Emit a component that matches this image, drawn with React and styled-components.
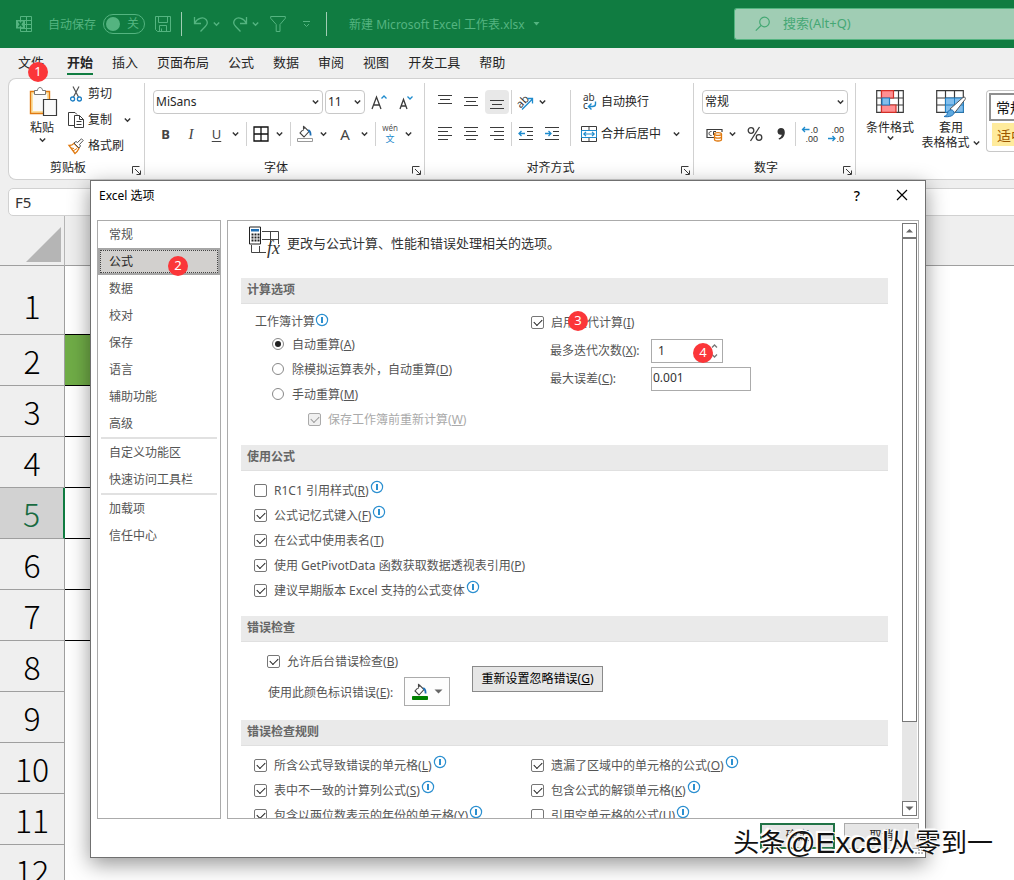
import React from 'react';
import styled, { createGlobalStyle, css } from 'styled-components';

const Global = createGlobalStyle`
  * { box-sizing: border-box; }
  body { margin: 0; background: #efefef; }
  body, button, input, select {
    font-family: "Noto Sans", "Noto Sans CJK SC", sans-serif;
    font-size: 12px;
    color: #262626;
  }
  button { padding: 0; border: 0; background: none; }
  svg { display: block; flex: none; overflow: visible; }
`;

const Page = styled.div`
  position: relative;
  display: flex;
  flex-direction: column;
  height: 100vh;
  overflow: hidden;
`;

/* ---------- title bar ---------- */
const TitleBar = styled.header`
  flex: none;
  display: flex;
  align-items: center;
  height: 48px;
  padding-left: 16px;
  background: #107c41;
  color: #54b480;
  white-space: nowrap;
`;
const TitleGroup = styled.div`
  display: flex;
  align-items: center;
  gap: ${(p) => p.$gap || 0}px;
  margin-left: ${(p) => p.$before || 0}px;
`;
const TitleButton = styled.button`
  display: flex;
  align-items: center;
  justify-content: center;
  width: ${(p) => p.$w}px;
  height: 24px;
  color: #54b480;
`;
const TitleRule = styled.span`
  width: 1px;
  height: 24px;
  background: #a0cdb4;
`;
const Toggle = styled.button`
  display: flex;
  align-items: center;
  justify-content: space-between;
  width: 42px;
  height: 20px;
  padding: 0 5px 0 2px;
  border: 1px solid #54b480;
  border-radius: 10px;
  color: #54b480;
  line-height: 16px;
`;
const Knob = styled.span`
  width: 14px;
  height: 14px;
  border-radius: 50%;
  background: #54b480;
`;
const FileName = styled.h1`
  margin: 0;
  font-size: 12px;
  font-weight: 400;
`;
const Search = styled.label`
  display: flex;
  align-items: center;
  gap: 12px;
  flex: 0 0 280px;
  height: 32px;
  margin-left: auto;
  padding-left: 20px;
  border: 1px solid #54b480;
  border-right: 0;
  border-radius: 3px 0 0 3px;
  background: #a0cdb4;
`;
const SearchInput = styled.input`
  flex: 1;
  min-width: 0;
  border: 0;
  padding: 0 0 2px;
  background: none;
  font-size: 13px;
  &::placeholder { color: #45a874; opacity: 1; }
`;

/* ---------- ribbon ---------- */
const Tabs = styled.nav`
  flex: none;
  display: flex;
  align-items: flex-start;
  gap: 19px;
  height: 30px;
  padding: 3px 18px 0;
`;
const Tab = styled.button`
  height: 24px;
  font-size: 13px;
  line-height: 20px;
  white-space: nowrap;
  font-weight: ${(p) => (p.$active ? 700 : 400)};
  border-bottom: 2px solid ${(p) => (p.$active ? '#107c41' : 'transparent')};
  &:first-child { margin-right: 4px; }
`;
const Ribbon = styled.section`
  flex: none;
  display: flex;
  height: 102px;
  margin-left: 8px;
  padding: 4px 0;
  overflow: hidden;
  border: 1px solid #d1d1d1;
  border-right: 0;
  border-radius: 8px 0 0 8px;
  background: #fff;
`;
const Group = styled.div`
  flex: none;
  display: flex;
  flex-direction: column;
  justify-content: space-between;
  width: ${(p) => p.$w}px;
  border-right: 1px solid #d1d1d1;
`;
const GroupBody = styled.div`
  display: flex;
  padding: ${(p) => p.$pad || '7px 0 0 8px'};
`;
const GroupFoot = styled.div`
  display: grid;
  grid-template-columns: 1fr auto;
  align-items: end;
  gap: 5px;
  height: 15px;
  padding: 0 3px 0 0;
  text-align: center;
  line-height: 14px;
`;
const Stack = styled.div`
  display: flex;
  flex-direction: column;
  gap: ${(p) => p.$gap || 8}px;
  padding-left: ${(p) => p.$indent || 0}px;
  ${(p) => p.$rule && css`
    width: ${p.$rule}px;
    border-right: 1px solid #d1d1d1;
  `}
`;
const Row = styled.div`
  display: flex;
  align-items: center;
  gap: ${(p) => p.$gap || 0}px;
  height: 24px;
`;
const ClipRow = styled.div`
  display: flex;
  align-items: center;
  height: 21px;
`;
const Tool = styled.button`
  flex: none;
  display: flex;
  align-items: center;
  justify-content: center;
  gap: 4px;
  width: ${(p) => (p.$w ? `${p.$w}px` : 'auto')};
  height: ${(p) => p.$h || 24}px;
  border-radius: 4px;
  white-space: nowrap;
  line-height: 18px;
  background: ${(p) => (p.$on ? '#e8e8e8' : 'none')};
`;
const Rule = styled.span`
  width: 1px;
  height: 24px;
  margin: 0 ${(p) => p.$right || 2}px 0 ${(p) => p.$left || 2}px;
  background: #d1d1d1;
`;
const Combo = styled.span`
  position: relative;
  display: flex;
  align-items: center;
  width: ${(p) => p.$w}px;
  height: 24px;
  border: 1px solid #c8c8c8;
  border-radius: 4px;
  background: #fff;
  svg { position: absolute; right: 2px; pointer-events: none; }
`;
const ComboSelect = styled.select`
  width: 100%;
  height: 100%;
  padding: 0 2px 1px;
  border: 0;
  appearance: none;
  background: none;
`;
const Glyph = styled.span`
  font-size: ${(p) => p.$size || 13}px;
  font-weight: ${(p) => (p.$bold ? 700 : 400)};
  font-style: ${(p) => (p.$italic ? 'italic' : 'normal')};
  text-decoration: ${(p) => (p.$line ? 'underline' : 'none')};
  text-underline-offset: 2px;
  font-family: ${(p) => (p.$italic ? '"Liberation Serif", serif' : 'inherit')};
  color: #444;
`;
const StylesGroup = styled.div`
  flex: 1;
  display: flex;
  align-items: flex-start;
  min-width: 0;
  padding: 7px 0 0 4px;
`;
const BigTool = styled.button`
  flex: none;
  display: flex;
  flex-direction: column;
  align-items: center;
  width: ${(p) => p.$w}px;
  padding-top: ${(p) => p.$top || 0}px;
  line-height: 15px;
  gap: ${(p) => p.$gap || 0}px;
`;
const BigIcon = styled.span`
  display: flex;
  align-items: flex-start;
  height: 30px;
`;
const BigLabel = styled.span`
  display: flex;
  align-items: center;
  gap: 2px;
  white-space: nowrap;
`;
const Gallery = styled.div`
  flex: 1;
  display: flex;
  flex-direction: column;
  gap: 2px;
  height: 62px;
  margin-left: 4px;
  padding: 2px 0 0 2px;
  border: 1px solid #c8c8c8;
  border-right: 0;
  border-radius: 4px 0 0 4px;
`;
const StyleSwatch = styled.button`
  height: ${(p) => (p.$warn ? 23 : 28)}px;
  margin-left: ${(p) => (p.$warn ? 3 : 0)}px;
  padding-left: 5px;
  text-align: left;
  font-size: 14px;
  white-space: nowrap;
  overflow: hidden;
  background: ${(p) => (p.$warn ? '#ffeb9c' : '#fff')};
  color: ${(p) => (p.$warn ? '#9c5700' : '#111')};
  border: ${(p) => (p.$warn ? 0 : '2px solid #8f8f8f')};
  border-right: 0;
`;

/* ---------- formula bar and sheet ---------- */
const FormulaBar = styled.div`
  flex: none;
  display: flex;
  height: 28px;
  margin: 8px 0 0 8px;
`;
const NameBox = styled.input`
  width: 120px;
  padding: 0 6px 1px;
  border: 1px solid #d1d1d1;
  border-radius: 5px;
  font-size: 15px;
  color: #333;
`;
const FormulaInput = styled.input`
  flex: 1;
  margin-left: 8px;
  border: 1px solid #d1d1d1;
  border-right: 0;
`;
const SheetArea = styled.main`
  flex: 1;
  min-height: 0;
  overflow: hidden;
  background: #fff;
`;
const Sheet = styled.table`
  width: 100%;
  table-layout: fixed;
  border-collapse: separate;
  border-spacing: 0;
  th, td { padding: 0; }
`;
const Corner = styled.th`
  width: 65px;
  height: 50px;
  background: #efefef;
  border-bottom: 1px solid #9f9f9f;
  border-right: 1px solid #b5b5b5;
  vertical-align: bottom;
  svg { margin: 0 0 3px 26px; }
`;
const ColumnHead = styled.th`
  width: ${(p) => (p.$w ? `${p.$w}px` : 'auto')};
  background: #efefef;
  border-bottom: 1px solid #9f9f9f;
`;
const RowHead = styled.th`
  height: ${(p) => (p.$tall ? 69 : 51)}px;
  background: ${(p) => (p.$active ? '#d2d2d2' : '#efefef')};
  border-bottom: 1px solid #9f9f9f;
  border-right: ${(p) => (p.$active ? '2px solid #107c41' : '1px solid #9f9f9f')};
  color: ${(p) => (p.$active ? '#186b41' : '#000')};
  font-family: "Noto Sans CJK SC", sans-serif;
  font-size: 32px;
  font-weight: 300;
  line-height: ${(p) => (p.$tall ? 58 : 50)}px;
  vertical-align: bottom;
`;
const Cell = styled.td`
  background: ${(p) => (p.$green ? '#70ad47' : '#fff')};
  border-bottom: ${(p) => (p.$line ? '1px solid #000' : 0)};
`;

/* ---------- options dialog ---------- */
const Dialog = styled.div`
  position: absolute;
  top: 180px;
  right: 88px;
  bottom: 22px;
  left: 90px;
  display: flex;
  flex-direction: column;
  padding: 0 6px 8px;
  border: 1px solid #707070;
  background: #fff;
  box-shadow: 0 6px 20px rgba(0, 0, 0, 0.42);
`;
const DialogTitle = styled.div`
  flex: none;
  display: flex;
  align-items: center;
  height: 28px;
  padding: 0 6px 0 2px;
  color: #000;
`;
const DialogName = styled.h2`
  flex: 1;
  margin: 0;
  font-size: 12px;
  font-weight: 400;
`;
const DialogButton = styled.button`
  display: flex;
  align-items: center;
  justify-content: center;
  width: 22px;
  height: 22px;
  margin-left: 23px;
  font-size: 14px;
  font-weight: 500;
  color: #000;
`;
const DialogBody = styled.div`
  flex: 1;
  min-height: 0;
  display: flex;
  gap: 6px;
  margin-top: 11px;
`;
const SideNav = styled.nav`
  flex: 0 0 124px;
  border: 1px solid #ababab;
`;
const NavItem = styled.button`
  display: block;
  width: 100%;
  height: 27px;
  padding: 0 0 2px ${(p) => (p.$active ? 9 : 11)}px;
  text-align: left;
  color: ${(p) => (p.$active ? '#262626' : '#555')};
  ${(p) => p.$active && css`
    background: #d2d0ce;
    border: 2px solid #a6a6a6;
    outline: 1px dotted #444;
    outline-offset: -3px;
  `}
`;
const NavRule = styled.hr`
  height: 2px;
  margin: 0 3px;
  border: 0;
  background: #e1e1e1;
`;
const Panel = styled.div`
  flex: 1;
  min-width: 0;
  display: flex;
  padding: 0 1px 0 13px;
  border: 1px solid #ababab;
  overflow: hidden;
`;
const PanelBody = styled.div`
  flex: 1;
  min-width: 0;
  overflow: hidden;
  color: #555;
`;
const Intro = styled.div`
  display: flex;
  align-items: center;
  gap: 6px;
  height: 57px;
  padding: 0 0 14px 8px;
  color: #333;
  font-size: 13px;
`;
const SectionHead = styled.h3`
  height: 26px;
  margin: 0;
  padding-left: 6px;
  border-bottom: 1px solid #e0e0e0;
  background: #eaeaea;
  font-size: 12px;
  font-weight: 700;
  line-height: 24px;
  color: #666;
`;
const SectionBody = styled.div`
  display: grid;
  grid-template-columns: ${(p) => (p.$cols ? `${p.$cols}px 1fr` : '1fr')};
  padding: ${(p) => p.$pad || '7px 0 13px 13px'};
`;
const Field = styled.label`
  display: flex;
  align-items: center;
  height: 25px;
  padding-left: ${(p) => p.$indent || 0}px;
  white-space: nowrap;
  color: ${(p) => (p.$dim ? '#aaa' : '#555')};
`;
const FieldText = styled.span`
  padding: 0 0 2px 7px;
`;
const InfoUp = styled.span`
  align-self: flex-start;
  padding: 2px 0 0 1px;
`;
const Box = styled.input`
  appearance: none;
  position: relative;
  flex: none;
  width: 13px;
  height: 13px;
  margin: 0;
  border: 1px solid #777;
  border-radius: 2px;
  background: #fff;
  &:checked::after {
    content: "";
    position: absolute;
    left: 2px;
    top: 2px;
    width: 7px;
    height: 4px;
    border: solid #222;
    border-width: 0 0 1px 1px;
    transform: rotate(-45deg);
  }
  &:disabled { border-color: #aaa; background: #f0f0f0; }
  &:disabled::after { border-color: #999; }
`;
const Radio = styled.input`
  appearance: none;
  flex: none;
  display: grid;
  place-items: center;
  width: 12px;
  height: 12px;
  margin: 0 1px 2px 0;
  border: 1px solid #888;
  border-radius: 50%;
  background: #fff;
  &:checked::after {
    content: "";
    width: 6px;
    height: 6px;
    border-radius: 50%;
    background: #222;
  }
`;
const GroupTitle = styled.div`
  display: flex;
  align-items: center;
  height: 22px;
  padding-left: 1px;
  svg { margin-bottom: 2px; }
`;
const InputRow = styled.div`
  display: flex;
  align-items: center;
  height: 24px;
  margin-top: 4px;
`;
const InputLabel = styled.label`
  width: 101px;
  margin-left: 19px;
  padding-bottom: 2px;
`;
const TextInput = styled.input`
  width: 100px;
  height: 24px;
  padding: 0 1px 3px;
  border: 1px solid #ababab;
  color: #333;
`;
const Spin = styled.span`
  display: flex;
  align-items: center;
  width: 72px;
  height: 24px;
  padding-right: 4px;
  border: 1px solid #ababab;
`;
const SpinInput = styled.input`
  flex: 1;
  min-width: 0;
  padding: 0 6px 2px;
  border: 0;
  color: #333;
`;
const ErrorOptions = styled.div`
  width: 205px;
`;
const ColorRow = styled.div`
  display: flex;
  align-items: center;
  justify-content: space-between;
  width: 182px;
  height: 29px;
  margin: 3px 0 0 1px;
  white-space: nowrap;
`;
const ColorButton = styled.button`
  display: flex;
  align-items: center;
  justify-content: center;
  gap: 6px;
  width: 46px;
  height: 29px;
  border: 1px solid #ababab;
  background: #fdfdfd;
`;
const PushButton = styled.button`
  width: ${(p) => p.$w || 75}px;
  height: 26px;
  padding-bottom: 2px;
  border: ${(p) => (p.$primary ? '2px solid #217346' : '1px solid #ababab')};
  background: #e6e6e6;
  color: #262626;
`;
const ResetButton = styled(PushButton)`
  align-self: start;
  margin-top: 17px;
  border-color: #8a8a8a;
  color: #000;
`;
const Footer = styled.div`
  flex: none;
  display: flex;
  justify-content: flex-end;
  gap: 9px;
  padding-top: 4px;
`;
const ScrollBar = styled.div`
  flex: none;
  display: flex;
  flex-direction: column;
  width: 15px;
  margin: 2px 0 2px 14px;
  background: #e6e6e6;
`;
const ScrollButton = styled.button`
  display: grid;
  place-items: center;
  height: 15px;
  border: 1px solid #777;
  background: #fff;
`;
const ScrollTrack = styled.div`
  flex: 1;
`;
const ScrollThumb = styled.div`
  height: 86%;
  border: 1px solid #777;
  background: #fff;
`;
const ResizeGrip = styled.span`
  position: absolute;
  right: 2px;
  bottom: 2px;
`;
const Badge = styled.span`
  position: absolute;
  left: ${(p) => p.$x}px;
  top: ${(p) => p.$y}px;
  width: 20px;
  height: 20px;
  border-radius: 50%;
  background: #fb3639;
  color: #fff;
  font-size: 13px;
  line-height: 19px;
  text-align: center;
`;
const Watermark = styled.div`
  position: absolute;
  right: 21px;
  bottom: 17px;
  display: flex;
  align-items: center;
  font-family: "Liberation Sans", "Noto Sans CJK SC", sans-serif;
  font-size: 26px;
  line-height: 40px;
  white-space: nowrap;
  color: #111;
  text-shadow: -1px -1px 0 #fff, -2px -2px 1px #fff, 1px -1px 0 #fff;
`;
const WatermarkLatin = styled.span`
  font-size: 30px;
`;

/* ---------- icons ---------- */
const Svg = ({ w = 16, h = 16, children, ...rest }) => (
  <svg width={w} height={h} viewBox={`0 0 ${w} ${h}`} fill="none" stroke="#3b3b3b" aria-hidden="true" {...rest}>
    {children}
  </svg>
);
const Chevron = ({ color = '#333' }) => (
  <Svg w={9} h={6} stroke={color} strokeWidth="1.4"><path d="M1.8 1.5 4.5 4.2 7.2 1.5" /></Svg>
);
const Arrow = ({ up }) => (
  <Svg w={9} h={5} stroke="none"><path fill="#666" d={up ? 'M1 4.5h7L4.5 1z' : 'M.5 0.5h8L4.5 4.5z'} /></Svg>
);
const Info = () => (
  <Svg w={14} h={14} stroke="#2b8fd0">
    <circle cx="7" cy="7" r="5.6" strokeWidth="1.2" />
    <path d="M7 4v6" strokeWidth="2" />
  </Svg>
);
const Launcher = () => (
  <Svg w={9} h={9}><path d="M.5 7.5v-7h7M3 3l5 5M8.5 4.5v4h-4" /></Svg>
);
const Lines = ({ rows }) => (
  <Svg>{rows.map(([x, y, l]) => <path key={y} d={`M${x} ${y}.5h${l}`} />)}</Svg>
);
const top3 = [[1, 1, 14], [3, 5, 10], [1, 9, 14]];
const mid3 = [[1, 3, 14], [3, 7, 10], [1, 11, 14]];
const bot3 = [[1, 6, 14], [3, 10, 10], [1, 14, 14]];
const left4 = [[1, 1, 14], [1, 5, 10], [1, 9, 14], [1, 13, 10]];
const center4 = [[1, 1, 14], [3, 5, 10], [1, 9, 14], [3, 13, 10]];
const right4 = [[1, 1, 14], [5, 5, 10], [1, 9, 14], [5, 13, 10]];

const ExcelIcon = () => (
  <Svg stroke="#54b480">
    <path d="M4.5 4V.5h11v15h-11V12M10.5 .5v15M4.5 4.5h11M9 8.5h6.5M4.5 12.5h11" />
    <path d="M0 4h9v8.5H0z" fill="#54b480" stroke="none" />
    <path d="m2.5 5.5 4 5.5m0-5.5-4 5.5" stroke="#107c41" strokeWidth="1.4" />
  </Svg>
);
const SaveIcon = () => (
  <Svg stroke="#54b480"><path d="M.5.5h15v15h-13l-2-2zM3.5.5v6h9v-6M4.5 15.5v-6h7v6M6.5 12.5v3" /></Svg>
);
const UndoIcon = () => (
  <Svg stroke="#54b480" strokeWidth="1.3"><path d="M1.5 1v6.5H8M1.5 7.5C4 2 10 .5 13 3.5c2 2.3 1.3 5-.7 7L7.5 15.5" /></Svg>
);
const RedoIcon = () => (
  <Svg stroke="#54b480" strokeWidth="1.3"><path d="M14.5 1v6.5H8M14.5 7.5C12 2 6 .5 3 3.5c-2 2.3-1.3 5 .7 7l4.8 5" /></Svg>
);
const FunnelIcon = () => (
  <Svg stroke="#54b480"><path d="M.7.5h14.6v1.8L10 8.5v7H6.2v-7L.7 2.3z" /></Svg>
);
const MoreIcon = () => (
  <Svg w={9} h={8} stroke="#54b480"><path d="M1 1.5h7M2 4l2.5 2.5L7 4" /></Svg>
);
const SearchIcon = () => (
  <Svg stroke="#45a874" strokeWidth="1.2"><circle cx="9.5" cy="6" r="4.8" /><path d="M6 9.5.8 14.7" /></Svg>
);
const PasteIcon = () => (
  <Svg w={30} h={32}>
    <path d="M3.5 5.5h19v22h-19z" stroke="#e07a10" fill="#fde0a0" strokeWidth="1.4" />
    <path d="M6 8h14v17H6z" fill="#fafafa" stroke="none" />
    <path d="M7.500 8.5v-4h3c0-4 5-4 5 0h3v4z" fill="#fff" stroke="#777" />
    <path d="M16.5 13.500h13v16h-13z" fill="#fafafa" strokeWidth="1.2" />
  </Svg>
);
const CutIcon = () => (
  <Svg>
    <path d="M5 .5 10.5 11M11 .5 5.5 11" stroke="#555" strokeWidth="1.2" />
    <circle cx="4.6" cy="13" r="2" stroke="#1e7fc4" strokeWidth="1.3" />
    <circle cx="11.4" cy="13" r="2" stroke="#1e7fc4" strokeWidth="1.3" />
  </Svg>
);
const CopyIcon = () => (
  <Svg>
    <path d="M6 13.5H.5V.5H7l2 2" />
    <path d="M6.5 3.5h5l4 4v8h-9zM11.5 3.5v4h4M8.5 9.5h5M8.5 12.5h5" fill="#fff" />
  </Svg>
);
const BrushIcon = () => (
  <Svg>
    <path d="M1 7.5c3 0 4-1 5-2.2L11 10.5c-1 2-2 3.5-4 5z" fill="#fff" stroke="#e07a10" strokeWidth="1.3" />
    <path d="m3 10 3 .5M5 13l4-2.5" stroke="#e07a10" />
    <path d="m6 5 2-1.5 1.5 1L13.5 .8l1.7 1.7L11.5 6.5l1 1.5L11 10z" fill="#fff" stroke="#555" />
  </Svg>
);
const BorderIcon = () => (
  <Svg><path d="M1 1h14v14H1zM8 1v14M1 8h14" stroke="#111" strokeWidth="1.3" /></Svg>
);
const FillIcon = ({ color = '#fff', line = '#999' }) => (
  <Svg>
    <path d="M8 1.5 3 7l4 4 5-5.5zM8 1.5 6.5 .5v4" stroke="#444" strokeWidth="1.1" />
    <path d="M11 4.5c2 0 2.6 2 2.6 5" stroke="#1e6fb5" strokeWidth="1.8" />
    <path d="M.5 12.5h15v3H.5z" fill={color} stroke={line} />
  </Svg>
);
const FontSize = ({ up }) => (
  <Svg w={17} h={16}>
    <path d={up ? 'm1 15 4.5-12L10 15M2.6 11h5.8' : 'm3 15 3.5-9.5L10 15M4.3 12h4.4'} strokeWidth="1.3" />
    <path d={up ? 'm10.5 4.5 2.5-2.5 2.5 2.5' : 'M10.5 2.5 13 5l2.5-2.5'} stroke="#1e8bcd" strokeWidth="1.3" />
  </Svg>
);
const PhoneticIcon = () => (
  <Svg w={16} h={18} stroke="none">
    <text x="8" y="6" fontSize="8" textAnchor="middle" fill="#555">wén</text>
    <text x="8" y="17" fontSize="9" textAnchor="middle" fill="#1e8bcd">文</text>
  </Svg>
);
const OrientIcon = () => (
  <Svg w={18} h={18} stroke="none">
    <text x="1" y="13" fontSize="11" fill="#333" transform="rotate(-45 6 10)">ab</text>
    <path d="M6 16.5 16 6.5M11.5 5.5h5v5" stroke="#1e8bcd" strokeWidth="1.3" />
  </Svg>
);
const WrapIcon = () => (
  <Svg w={16} h={18} stroke="none">
    <text x="2" y="8" fontSize="10" fill="#333">ab</text>
    <text x="2" y="16" fontSize="10" fill="#333">c</text>
    <path d="M14.5 8.5v2.5c0 1.5-1 2.5-3 2.5H8M10.5 10.5l-3 3 3 3" stroke="#1e8bcd" strokeWidth="1.4" />
  </Svg>
);
const IndentIcon = ({ right }) => (
  <Svg>
    <path d="M1 1.5h14M9 5.5h6M9 9.5h6M1 13.5h14" />
    <path d={right ? 'M1 7.5h6M4.5 5l2.5 2.5L4.5 10' : 'M7 7.5H1M3.5 5 1 7.5 3.5 10'} stroke="#1e8bcd" strokeWidth="1.3" />
  </Svg>
);
const MergeIcon = () => (
  <Svg>
    <path d="M.5 .5h15v15H.5zM8 1v3M8 12v3" />
    <path d="M.5 4.5h15v7H.5z" fill="#fff" stroke="#1e8bcd" />
    <path d="M3 8h10M5 5.8 2.8 8 5 10.2M11 5.8 13.2 8 11 10.2" stroke="#1e8bcd" strokeWidth="1.2" />
  </Svg>
);
const MoneyIcon = () => (
  <Svg w={17} h={16}>
    <path d="M8 11.5H1v-8h15V6" strokeWidth="1.2" />
    <path d="M5.5 5.5c-2 0-2.5 1-2.5 2s.5 2 2.5 2M7.5 9V5.5h2.5" />
    <path d="M8.5 8v5.5c0 2 7 2 7 0V8" fill="#fff" stroke="#e07a10" strokeWidth="1.3" />
    <ellipse cx="12" cy="8" rx="3.5" ry="1.4" fill="#fff" stroke="#e07a10" strokeWidth="1.3" />
    <path d="M8.5 10.8c0 1.8 7 1.8 7 0" stroke="#e07a10" strokeWidth="1.3" />
  </Svg>
);
const PercentIcon = () => (
  <Svg strokeWidth="1.3"><circle cx="4" cy="4.5" r="2.8" /><circle cx="12" cy="11.5" r="2.8" /><path d="M12.5 1 3.5 15" /></Svg>
);
const CommaIcon = () => (
  <Svg w={10} h={16} stroke="none">
    <path d="M5 2c2.4 0 3.8 1.6 3.8 4.2 0 3.600-2 6.6-5.800 7.3l-.4-1.2c2-.8 3-2 3.2-3.600C3.2 9.200 1.500 7.800 1.500 5.500 1.500 3.500 3 2 5 2z" fill="#333" />
  </Svg>
);
const DecimalIcon = ({ less }) => (
  <Svg w={16} h={18} stroke="none" fontFamily="Liberation Sans, sans-serif" fontSize="9">
    <text x="16" y="8" textAnchor="end" fill="#333">{less ? '.00' : '.0'}</text>
    <text x="16" y="17" textAnchor="end" fill="#333">{less ? '.0' : '.00'}</text>
    <path d={less ? 'M0 13.5h7M4.5 11 7 13.5 4.5 16' : 'M7.5 4.5H.5M3 2 .5 4.5 3 7'} stroke="#1e8bcd" strokeWidth="1.3" />
  </Svg>
);
const ConditionalIcon = () => (
  <Svg w={28} h={23}>
    <path d="M.7.7h26.6v21.6H.7zM.7 8h26.6M.7 15h26.6M5.5.7v21.6M22.5.7v21.6" strokeWidth="1.2" />
    <path d="M5.5.7h12V8h-12zM5.5 15h14.5v7.3H5.5z" fill="#ff8f92" stroke="#d22f27" strokeWidth="1.2" />
    <path d="M6 8h7.5v7H6z" fill="#83beec" stroke="#1e7fc4" strokeWidth="1.2" />
  </Svg>
);
const TableStyleIcon = () => (
  <Svg w={31} h={28}>
    <path d="M.7.7h26.6v21.6H.7zM.7 8h26.6M.7 15h26.6M9.5.7v21.6M18.5.7v21.6" strokeWidth="1.2" />
    <path d="M9.5 8h17.8v14.3H9.5z" fill="#83beec" stroke="#1e7fc4" />
    <path d="M9.5 15h17.8M18.5 8v14" stroke="#1e7fc4" />
    <path d="M14 19 27 7.500c2-1 3 .3 2 2L18.500 23z" fill="#fff" stroke="#555" />
    <path d="M8 26.5c3-.5 3-2.5 4-5 1-2 5-2.5 6 .5.8 3.5-5 5.5-10 4.5z" fill="#5ea9e0" stroke="#1e6fb5" />
  </Svg>
);
const CornerIcon = () => (
  <Svg w={35} h={35} stroke="none"><path d="M35 0v35H0z" fill="#b5b5b5" /></Svg>
);
const FormulaPageIcon = () => (
  <Svg w={32} h={33}>
    <path d="M13 5.5h16.5V18M13 13.5h16M2.5 19v7.5H17M21.5 6v12M10.5 20v6" stroke="#444" />
    <path d="M.5 1h11v17H.5z" fill="#fff" stroke="#222" />
    <path d="M2 3h8v2.5H2z" fill="#1e6fb5" stroke="none" />
    <path d="M2.5 8.5h8M2.5 11.5h8M2.5 14.5h8" stroke="#222" strokeWidth="2" strokeDasharray="2 1" />
    <text x="18" y="28" fontSize="18" fontStyle="italic" fontFamily="Liberation Serif, serif" fill="#333" stroke="none">fx</text>
  </Svg>
);
const CloseIcon = () => (
  <Svg w={12} h={12} stroke="#000" strokeWidth="1.2"><path d="m1 1 10 10M11 1 1 11" /></Svg>
);
const SpinIcon = () => (
  <Svg w={7} h={16} stroke="#777" strokeWidth="1.3"><path d="m1 4.5 2.5-2.500L6 4.5M1 11.5 3.5 14 6 11.5" /></Svg>
);
const GripIcon = () => (
  <Svg w={9} h={9} stroke="#bbb" strokeWidth="2"><path d="M7 1h2M4 4h2M7 4h2M1 7h2M4 7h2M7 7h2" /></Svg>
);

/* ---------- parts ---------- */
const Key = ({ k }) => <>(<u>{k}</u>)</>;

const CheckField = ({ text, k, info, off, disabled, indent }) => (
  <Field $indent={indent} $dim={disabled}>
    <Box type="checkbox" defaultChecked={!off} disabled={disabled} />
    <FieldText>{text}{k && <Key k={k} />}</FieldText>
    {info && <InfoUp><Info /></InfoUp>}
  </Field>
);
const RadioField = ({ text, k, on }) => (
  <Field $indent={18}>
    <Radio type="radio" name="calc" defaultChecked={on} />
    <FieldText>{text}<Key k={k} /></FieldText>
  </Field>
);
const Drop = ({ w = 12, label }) => <Tool $w={w} aria-label={label}><Chevron /></Tool>;
const Foot = ({ children }) => (
  <GroupFoot>
    <span>{children}</span>
    <Tool $w={9} $h={9} aria-label={`${children}设置`}><Launcher /></Tool>
  </GroupFoot>
);

const tabs = ['文件', '开始', '插入', '页面布局', '公式', '数据', '审阅', '视图', '开发工具', '帮助'];
const navItems = ['常规', '公式', '数据', '校对', '保存', '语言', '辅助功能', '高级', null, '自定义功能区', '快速访问工具栏', null, '加载项', '信任中心'];
const rows = [1, 2, 3, 4, 5, 6, 7, 8, 9, 10, 11, 12];

export default function App() {
  return (
    <Page>
      <Global />
      <TitleBar>
        <ExcelIcon />
        <TitleGroup $before={16} $gap={7}>
          <span>自动保存</span>
          <Toggle aria-label="自动保存"><Knob />关</Toggle>
        </TitleGroup>
        <TitleGroup $before={10} $gap={10}>
          <TitleButton $w={16} aria-label="保存"><SaveIcon /></TitleButton>
          <TitleRule />
        </TitleGroup>
        <TitleGroup $before={10}>
          <TitleButton $w={18} aria-label="撤消"><UndoIcon /></TitleButton>
          <TitleButton $w={12} aria-label="撤消列表"><Chevron color="#54b480" /></TitleButton>
        </TitleGroup>
        <TitleGroup $before={9}>
          <TitleButton $w={18} aria-label="恢复"><RedoIcon /></TitleButton>
          <TitleButton $w={12} aria-label="恢复列表"><Chevron color="#54b480" /></TitleButton>
        </TitleGroup>
        <TitleGroup $before={9} $gap={14}>
          <TitleButton $w={16} aria-label="筛选"><FunnelIcon /></TitleButton>
          <TitleButton $w={12} aria-label="自定义快速访问工具栏"><MoreIcon /></TitleButton>
          <TitleRule />
        </TitleGroup>
        <TitleGroup $before={22} $gap={8}>
          <FileName>新建 Microsoft Excel 工作表.xlsx</FileName>
          <Svg w={7} h={4} stroke="none"><path d="M.5 0h6L3.5 3.5z" fill="#54b480" /></Svg>
        </TitleGroup>
        <Search>
          <SearchIcon />
          <SearchInput placeholder="搜索(Alt+Q)" aria-label="搜索" />
        </Search>
      </TitleBar>

      <Tabs>
        {tabs.map((t) => <Tab key={t} $active={t === '开始'}>{t}</Tab>)}
      </Tabs>

      <Ribbon>
        <Group $w={136}>
          <GroupBody $pad="0 0 0 16px">
            <BigTool $w={34} $top={3} $gap={2}>
              <PasteIcon />
              <BigLabel>粘贴</BigLabel>
              <Chevron />
            </BigTool>
            <Stack $gap={5} $indent={9}>
              <ClipRow><Tool $h={21}><CutIcon />剪切</Tool></ClipRow>
              <ClipRow><Tool $h={21}><CopyIcon />复制</Tool><Drop w={30} label="复制选项" /></ClipRow>
              <ClipRow><Tool $h={21}><BrushIcon />格式刷</Tool></ClipRow>
            </Stack>
          </GroupBody>
          <Foot>剪贴板</Foot>
        </Group>

        <Group $w={280}>
          <GroupBody>
            <Stack>
              <Row $gap={2}>
                <Combo $w={170}><ComboSelect aria-label="字体"><option>MiSans</option></ComboSelect><Chevron /></Combo>
                <Combo $w={40}><ComboSelect aria-label="字号"><option>11</option></ComboSelect><Chevron /></Combo>
                <Tool $w={25} aria-label="增大字号"><FontSize up /></Tool>
                <Tool $w={22} aria-label="减小字号"><FontSize /></Tool>
              </Row>
              <Row>
                <Tool $w={25}><Glyph $bold>B</Glyph></Tool>
                <Tool $w={26}><Glyph $italic $size={15}>I</Glyph></Tool>
                <Tool $w={25}><Glyph $line>U</Glyph></Tool>
                <Drop label="下划线" />
                <Rule $left={5} $right={1} />
                <Tool $w={26} aria-label="边框"><BorderIcon /></Tool>
                <Drop w={10} label="边框选项" />
                <Rule $left={6} $right={4} />
                <Tool $w={20} aria-label="填充颜色"><FillIcon /></Tool>
                <Drop w={16} label="填充选项" />
                <Tool $w={28}><Glyph $size={15}>A</Glyph></Tool>
                <Drop w={10} label="字体颜色选项" />
                <Rule $left={6} $right={6} />
                <Tool $w={16} aria-label="拼音"><PhoneticIcon /></Tool>
                <Drop w={20} label="拼音选项" />
              </Row>
            </Stack>
          </GroupBody>
          <Foot>字体</Foot>
        </Group>

        <Group $w={269}>
          <GroupBody>
            <Stack $rule={138}>
              <Row>
                <Tool $w={24} aria-label="顶端对齐"><Lines rows={top3} /></Tool>
                <Tool $w={28} aria-label="垂直居中"><Lines rows={mid3} /></Tool>
                <Tool $w={24} $on aria-label="底端对齐"><Lines rows={bot3} /></Tool>
                <Rule />
                <Tool $w={22} aria-label="方向"><OrientIcon /></Tool>
                <Drop label="方向选项" />
              </Row>
              <Row>
                <Tool $w={24} aria-label="左对齐"><Lines rows={left4} /></Tool>
                <Tool $w={28} aria-label="居中"><Lines rows={center4} /></Tool>
                <Tool $w={24} aria-label="右对齐"><Lines rows={right4} /></Tool>
                <Rule />
                <Tool $w={24} aria-label="减少缩进量"><IndentIcon /></Tool>
                <Tool $w={28} aria-label="增加缩进量"><IndentIcon right /></Tool>
              </Row>
            </Stack>
            <Stack $indent={10}>
              <Row><Tool><WrapIcon />自动换行</Tool></Row>
              <Row><Tool><MergeIcon />合并后居中</Tool><Drop w={30} label="合并选项" /></Row>
            </Stack>
          </GroupBody>
          <Foot>对齐方式</Foot>
        </Group>

        <Group $w={162}>
          <GroupBody>
            <Stack>
              <Row>
                <Combo $w={146}><ComboSelect aria-label="数字格式"><option>常规</option></ComboSelect><Chevron /></Combo>
              </Row>
              <Row>
                <Tool $w={24} aria-label="会计数字格式"><MoneyIcon /></Tool>
                <Drop label="会计格式选项" />
                <Tool $w={34} aria-label="百分比样式"><PercentIcon /></Tool>
                <Tool $w={18} aria-label="千位分隔样式"><CommaIcon /></Tool>
                <Rule $left={5} $right={5} />
                <Tool $w={18} aria-label="增加小数位数"><DecimalIcon /></Tool>
                <Tool $w={34} aria-label="减少小数位数"><DecimalIcon less /></Tool>
              </Row>
            </Stack>
          </GroupBody>
          <Foot>数字</Foot>
        </Group>

        <StylesGroup>
          <BigTool $w={60}>
            <BigIcon><ConditionalIcon /></BigIcon>
            <BigLabel>条件格式</BigLabel>
            <BigLabel><Chevron /></BigLabel>
          </BigTool>
          <BigTool $w={62}>
            <BigIcon><TableStyleIcon /></BigIcon>
            <BigLabel>套用</BigLabel>
            <BigLabel>表格格式<Chevron /></BigLabel>
          </BigTool>
          <Gallery>
            <StyleSwatch>常规</StyleSwatch>
            <StyleSwatch $warn>适中</StyleSwatch>
          </Gallery>
        </StylesGroup>
      </Ribbon>

      <FormulaBar>
        <NameBox defaultValue="F5" aria-label="名称框" />
        <FormulaInput aria-label="编辑栏" />
      </FormulaBar>

      <SheetArea>
        <Sheet>
          <thead>
            <tr><Corner><CornerIcon /></Corner><ColumnHead $w={400} /><ColumnHead /></tr>
          </thead>
          <tbody>
            {rows.map((n) => (
              <tr key={n}>
                <RowHead $tall={n === 1} $active={n === 5}>{n}</RowHead>
                <Cell $green={n === 2} $line={n < 8} />
                <Cell />
              </tr>
            ))}
          </tbody>
        </Sheet>
      </SheetArea>

      <Dialog role="dialog" aria-label="Excel 选项">
        <DialogTitle>
          <DialogName>Excel 选项</DialogName>
          <DialogButton>?</DialogButton>
          <DialogButton aria-label="关闭"><CloseIcon /></DialogButton>
        </DialogTitle>
        <DialogBody>
          <SideNav>
            {navItems.map((t, i) => (t ? <NavItem key={t} $active={t === '公式'}>{t}</NavItem> : <NavRule key={i} />))}
          </SideNav>
          <Panel>
            <PanelBody>
              <Intro><FormulaPageIcon />更改与公式计算、性能和错误处理相关的选项。</Intro>

              <SectionHead>计算选项</SectionHead>
              <SectionBody $cols={277} $pad="6px 0 13px 13px">
                <div>
                  <GroupTitle>工作簿计算<Info /></GroupTitle>
                  <RadioField text="自动重算" k="A" on />
                  <RadioField text="除模拟运算表外，自动重算" k="D" />
                  <RadioField text="手动重算" k="M" />
                  <CheckField text="保存工作簿前重新计算" k="W" disabled indent={54} />
                </div>
                <div>
                  <CheckField text="启用迭代计算" k="I" />
                  <InputRow>
                    <InputLabel htmlFor="iterations">最多迭代次数<Key k="X" />:</InputLabel>
                    <Spin><SpinInput id="iterations" defaultValue="1" /><SpinIcon /></Spin>
                  </InputRow>
                  <InputRow>
                    <InputLabel htmlFor="delta">最大误差<Key k="C" />:</InputLabel>
                    <TextInput id="delta" defaultValue="0.001" />
                  </InputRow>
                </div>
              </SectionBody>

              <SectionHead>使用公式</SectionHead>
              <SectionBody>
                <CheckField text="R1C1 引用样式" k="R" info off />
                <CheckField text="公式记忆式键入" k="F" info />
                <CheckField text="在公式中使用表名" k="T" />
                <CheckField text="使用 GetPivotData 函数获取数据透视表引用" k="P" />
                <CheckField text="建议早期版本 Excel 支持的公式变体" info />
              </SectionBody>

              <SectionHead>错误检查</SectionHead>
              <SectionBody $cols={205} $pad="7px 0 14px 26px">
                <ErrorOptions>
                  <CheckField text="允许后台错误检查" k="B" />
                  <ColorRow>
                    <span>使用此颜色标识错误<Key k="E" />:</span>
                    <ColorButton aria-label="错误颜色"><FillIcon color="#008000" line="#008000" /><Arrow /></ColorButton>
                  </ColorRow>
                </ErrorOptions>
                <ResetButton $w={131}>重新设置忽略错误<Key k="G" /></ResetButton>
              </SectionBody>

              <SectionHead>错误检查规则</SectionHead>
              <SectionBody $cols={277}>
                <CheckField text="所含公式导致错误的单元格" k="L" info />
                <CheckField text="遗漏了区域中的单元格的公式" k="O" info />
                <CheckField text="表中不一致的计算列公式" k="S" info />
                <CheckField text="包含公式的解锁单元格" k="K" info />
                <CheckField text="包含以两位数表示的年份的单元格" k="Y" info />
                <CheckField text="引用空单元格的公式" k="U" info off />
              </SectionBody>
            </PanelBody>
            <ScrollBar>
              <ScrollButton aria-label="向上滚动"><Arrow up /></ScrollButton>
              <ScrollTrack><ScrollThumb /></ScrollTrack>
              <ScrollButton aria-label="向下滚动"><Arrow /></ScrollButton>
            </ScrollBar>
          </Panel>
        </DialogBody>
        <Footer>
          <PushButton $primary>确定</PushButton>
          <PushButton>取消</PushButton>
        </Footer>
        <ResizeGrip><GripIcon /></ResizeGrip>
        <Badge $x={77} $y={75}>2</Badge>
        <Badge $x={477} $y={130}>3</Badge>
        <Badge $x={602} $y={162}>4</Badge>
      </Dialog>

      <Badge $x={28} $y={62}>1</Badge>
      <Watermark>头条<WatermarkLatin>@Excel</WatermarkLatin>从零到一</Watermark>
    </Page>
  );
}
